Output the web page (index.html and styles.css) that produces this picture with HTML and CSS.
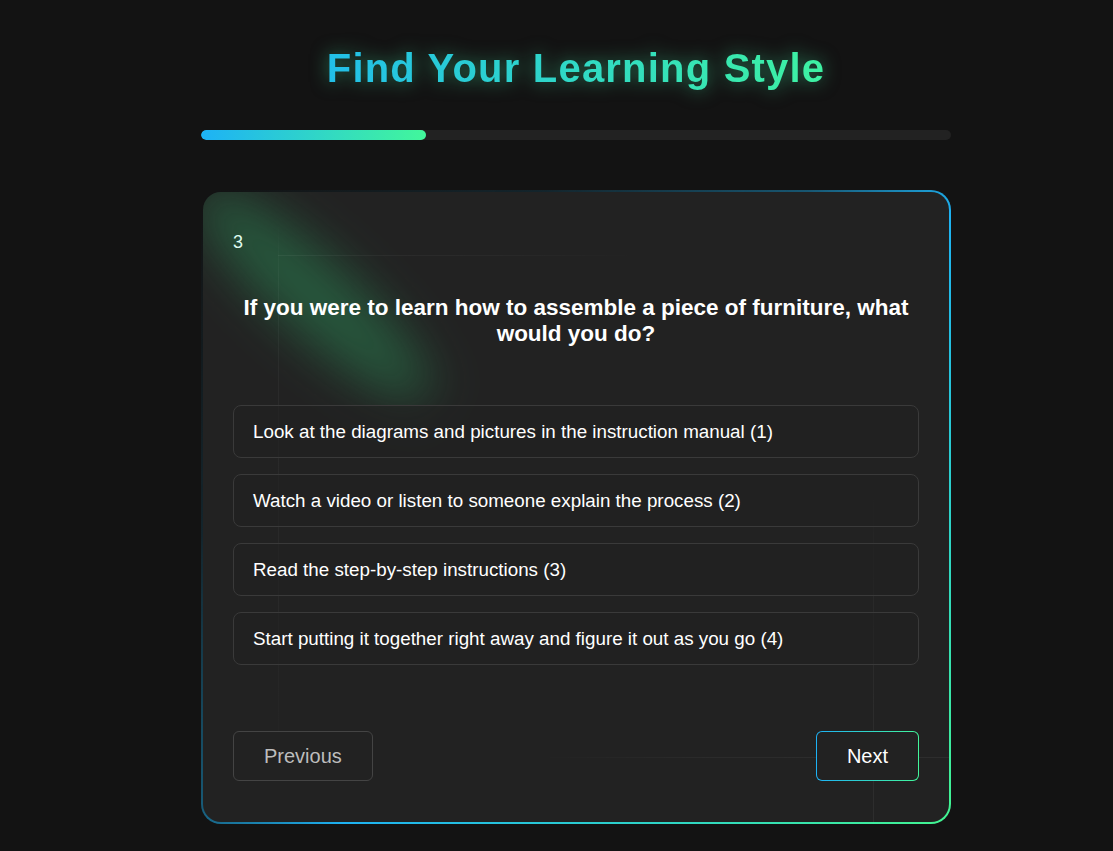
FILE: index.html
```html
<!DOCTYPE html>
<html lang="en">
<head>
<meta charset="utf-8">
<title>Find Your Learning Style</title>
<link rel="stylesheet" href="styles.css">
</head>
<body>
<main class="quiz">
  <h1 class="title">Find Your Learning Style</h1>
  <div class="progress"><div class="progress-fill" style="width: 30%"></div></div>
  <section class="card">
    <div class="qnum">3</div>
    <h2 class="question">If you were to learn how to assemble a piece of furniture, what would you do?</h2>
    <div class="options">
      <div class="option">Look at the diagrams and pictures in the instruction manual (1)</div>
      <div class="option">Watch a video or listen to someone explain the process (2)</div>
      <div class="option">Read the step-by-step instructions (3)</div>
      <div class="option">Start putting it together right away and figure it out as you go (4)</div>
    </div>
    <div class="nav">
      <button class="btn btn-prev">Previous</button>
      <button class="btn btn-next">Next</button>
    </div>
  </section>
</main>
</body>
</html>
```
FILE: styles.css
```css
html, body {
  margin: 0;
  padding: 0;
  background: #131313;
}
body {
  font-family: "Liberation Sans", Arial, sans-serif;
  color: #fff;
  padding: 45px 0 0 39px;
}
.quiz {
  width: 750px;
  margin: 0 auto;
}
.title {
  margin: 0 auto;
  width: fit-content;
  text-align: center;
  font-size: 40px;
  font-weight: 700;
  letter-spacing: 1.2px;
  line-height: 46px;
  background: linear-gradient(90deg, #22bfe8, #3ef2a2);
  -webkit-background-clip: text;
  background-clip: text;
  -webkit-text-fill-color: transparent;
  color: transparent;
  filter: drop-shadow(0 0 9px rgba(62, 230, 160, 0.5));
}
.progress {
  margin-top: 39px;
  height: 10px;
  border-radius: 5px;
  background: #222;
  overflow: hidden;
}
.progress-fill {
  height: 100%;
  border-radius: 5px;
  background: linear-gradient(90deg, #1db2f6, #42f79b);
}
.card {
  position: relative;
  margin-top: 50px;
  padding: 40px 30px 41px;
  border: 2px solid transparent;
  border-radius: 20px;
  background:
    linear-gradient(#222, #222) padding-box,
    linear-gradient(135deg, rgba(30, 170, 230, 0) 0%, rgba(30, 170, 230, 0.12) 25%, rgba(30, 170, 230, 0.45) 44%, #1eb2f2 56%, #2fd6c4 80%, #42f590 100%) border-box;
  overflow: hidden;
  isolation: isolate;
}
.card::before {
  content: "";
  position: absolute;
  left: -45px;
  top: 65px;
  width: 310px;
  height: 75px;
  border-radius: 50%;
  background: rgba(46, 190, 110, 0.34);
  filter: blur(24px);
  transform: rotate(42deg);
  z-index: -1;
  pointer-events: none;
}
.card::after {
  content: "";
  position: absolute;
  inset: 0;
  pointer-events: none;
  z-index: -1;
  background:
    linear-gradient(90deg, rgba(255,255,255,0.05), rgba(255,255,255,0.03) 60%, rgba(255,255,255,0)) 75px 63px / 360px 1px no-repeat,
    linear-gradient(180deg, rgba(255,255,255,0), rgba(255,255,255,0.04) 10%, rgba(255,255,255,0.03) 70%, rgba(255,255,255,0)) 75px 30px / 1px 560px no-repeat,
    linear-gradient(90deg, rgba(255,255,255,0), rgba(255,255,255,0.04) 40%, rgba(255,255,255,0.05)) 337px 565px / 410px 1px no-repeat,
    linear-gradient(180deg, rgba(255,255,255,0), rgba(255,255,255,0.04) 40%, rgba(255,255,255,0.05)) 670px 300px / 1px 340px no-repeat;
}
.qnum {
  font-size: 18px;
  line-height: 21px;
  color: #dffbf0;
}
.question {
  margin: 42px 0 58px;
  text-align: center;
  font-size: 22.5px;
  line-height: 26px;
  font-weight: 700;
  color: #fff;
}
.options {
  display: flex;
  flex-direction: column;
  gap: 16px;
}
.option {
  border: 1px solid #3a3a3a;
  border-radius: 8px;
  padding: 12px 19px;
  font-size: 18.8px;
  line-height: 27px;
  color: #fff;
  background: rgba(34, 34, 34, 0.6);
}
.nav {
  margin-top: 66px;
  display: flex;
  justify-content: space-between;
}
.btn {
  height: 50px;
  padding: 0 30px;
  border-radius: 6px;
  font-family: "Liberation Sans", Arial, sans-serif;
  font-size: 20px;
  cursor: pointer;
}
.btn-prev {
  border: 1px solid #444;
  background: #222;
  color: #bdbdbd;
}
.btn-next {
  border: 1px solid transparent;
  background:
    linear-gradient(#222, #222) padding-box,
    linear-gradient(90deg, #1db2f6, #42f79b) border-box;
  color: #fff;
}
```
